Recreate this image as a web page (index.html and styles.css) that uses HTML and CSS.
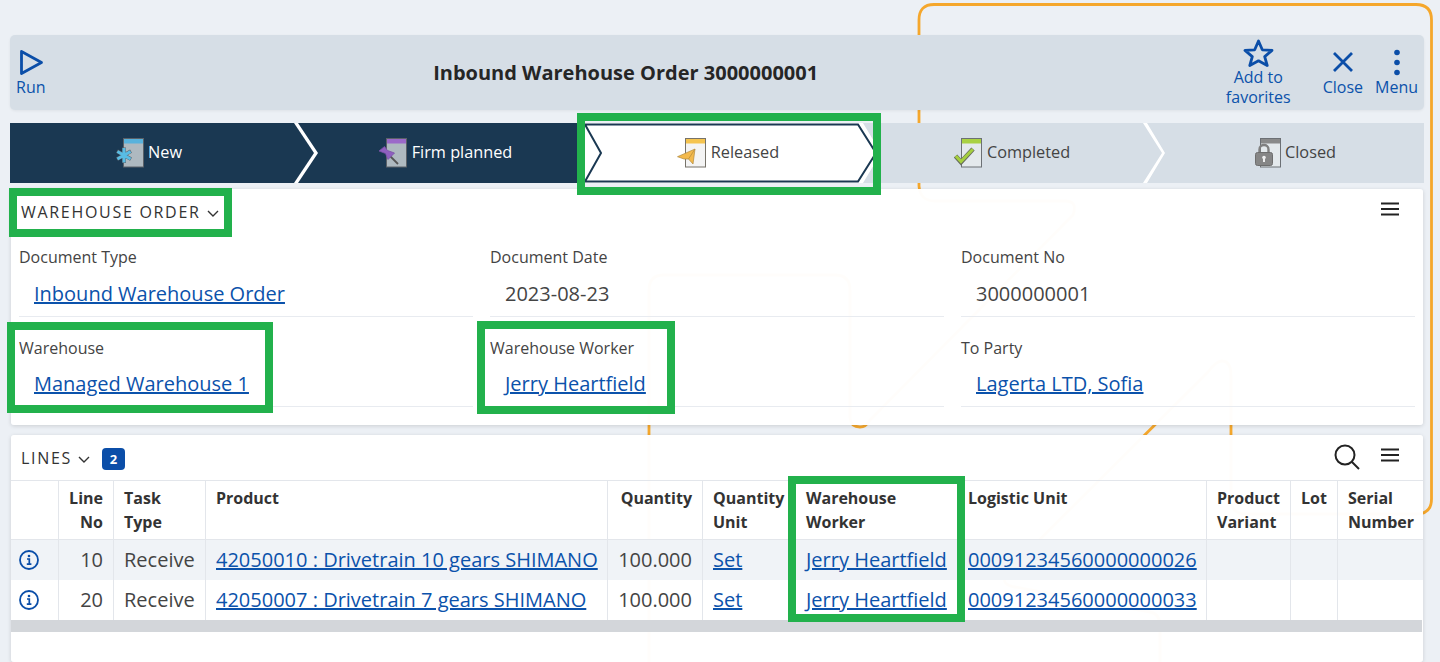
FILE: index.html
```html
<!DOCTYPE html>
<html lang="en">
<head>
  <meta charset="UTF-8" />
  <title>Inbound Warehouse Order 3000000001</title>
  <link rel="stylesheet" href="styles.css">
</head>
<body>
  <svg class="backdrop" width="1440" height="662" viewBox="0 0 1440 662" fill="none">
    <path d="M919 186V20Q919 4.5 934 4.5H1416Q1431.5 4.5 1431.5 20V499Q1431.5 514 1416 514H1246Q1231 514 1231 499V376Q1231 361 1222 361Q1216 361 1208 372L1006 573Q1000 585 1015 587L1150 612Q1160 614 1160 625V662"/>
    <path d="M649 662V290Q649 275 664 275H835Q850 275 850 290V418Q851 427 860 427Q866 427 870 420L1073 215Q1078 201 1065 201H935Q920 201 919 186"/>
  </svg>

  <div class="page">
    <div class="toolbar">
      <button class="tool">
        <svg width="26" height="27" viewBox="0 0 26 27" fill="none"><path d="M3.5 2.5L23.5 13.5L3.5 24.5Z" class="tool-stroke"/></svg>
        <span>Run</span>
      </button>
      <h1 class="title">Inbound Warehouse Order 3000000001</h1>
      <button class="tool tool-fav">
        <svg width="32" height="28" viewBox="0 0 32 28" fill="none"><path d="M16.5 2L20.3 10.8L30 11.4L22.7 17.6L25.2 26.5L16.5 21.8L7.8 26.5L10.3 17.6L3 11.4L12.7 10.8Z" class="tool-stroke"/></svg>
        <span>Add to<br>favorites</span>
      </button>
      <button class="tool">
        <svg width="24" height="27" viewBox="0 0 24 27" fill="none"><path d="M3 4L21 22M21 4L3 22" class="tool-stroke"/></svg>
        <span>Close</span>
      </button>
      <button class="tool">
        <svg width="10" height="27" viewBox="0 0 10 27"><circle cx="5" cy="3.5" r="2.8" fill="#0b4ea8"/><circle cx="5" cy="13.5" r="2.8" fill="#0b4ea8"/><circle cx="5" cy="23.5" r="2.8" fill="#0b4ea8"/></svg>
        <span>Menu</span>
      </button>
    </div>

    <div class="stepper">
      <div class="step step-new">
        <svg width="30" height="30" viewBox="0 0 30 30"><rect x="8.5" y="0.5" width="20" height="28.5" fill="#aeb9c0" stroke="#5b6168"/><rect x="9" y="1" width="19" height="4.5" fill="#58b2dc"/><path d="M9 9.5V25M2 13.2L16 21.2M16 13.2L2 21.2" stroke="#5b6168" stroke-width="3.8"/><path d="M9 10V24.5M2.4 13.5L15.6 21M15.6 13.5L2.4 21" stroke="#58bce4" stroke-width="3"/></svg>
        <span>New</span>
      </div>
      <div class="step step-firm">
        <svg width="30" height="30" viewBox="0 0 30 30"><rect x="8.5" y="0.5" width="20" height="28.5" fill="#aeb9c0" stroke="#5b6168"/><rect x="9" y="1" width="19" height="4.5" fill="#9b69c9"/><path d="M12 18L20 26" stroke="#555" stroke-width="1.8"/><path d="M1 13L6.5 8.5L9.5 12.5L16.5 15L10 21.5L7.5 15.5Z" fill="#8f5fc0" stroke="#7a52a6" stroke-width=".8"/></svg>
        <span>Firm planned</span>
      </div>
      <div class="step step-released">
        <svg class="step-shape" width="298" height="60" viewBox="0 0 298 60" fill="#fff"><path d="M3 1.5H276L294 30L276 58.5H3L19 30Z" stroke="#1a3852" stroke-width="2"/></svg>
        <svg width="30" height="30" viewBox="0 0 30 30"><rect x="8.5" y="0.5" width="20" height="28.5" fill="#f4f4f4" stroke="#77736a"/><rect x="9" y="1" width="19" height="4.5" fill="#f5c44f"/><path d="M0.5 18.7L18 11L16 26L11.5 21L7 21Z" fill="#f3b94c" stroke="#b08a3e" stroke-width=".7"/><path d="M18 11L11.5 21" stroke="#b08a3e" stroke-width=".7"/></svg>
        <span>Released</span>
      </div>
      <div class="step step-completed">
        <svg width="30" height="30" viewBox="0 0 30 30"><rect x="8.5" y="0.5" width="20" height="28.5" fill="#e4e9ec" stroke="#6c7075"/><rect x="9" y="1" width="19" height="4.5" fill="#a9d143"/><path d="M2.5 18L8 24L20 11" fill="none" stroke="#666b5c" stroke-width="4.6"/><path d="M2.8 18L8 23.6L19.8 11.2" fill="none" stroke="#a5cf3f" stroke-width="3"/></svg>
        <span>Completed</span>
      </div>
      <div class="step step-closed">
        <svg width="26" height="30" viewBox="0 0 26 30"><rect x="5.5" y="0.5" width="20" height="28.5" fill="#e4e9ec" stroke="#6c7075"/><rect x="6" y="1" width="19" height="4.5" fill="#8a8a8a"/><path d="M4.5 15V11.5C4.5 5.5 13.5 5.5 13.5 11.5V15" fill="none" stroke="#808080" stroke-width="2.4"/><rect x="0.5" y="14.5" width="17" height="13" rx="2" fill="#868686" stroke="#6e6e6e"/><path d="M9 19V24" stroke="#eee" stroke-width="2"/><circle cx="9" cy="19.5" r="1.8" fill="#eee"/></svg>
        <span>Closed</span>
      </div>
    </div>

    <section class="card card-order">
      <div class="card-head">
        <span class="card-name">WAREHOUSE ORDER</span>
        <svg class="chevron" width="12" height="7" viewBox="0 0 12 7" fill="none"><path d="M1 1L6 6L11 1"/></svg>
        <svg class="burger" width="18" height="14" viewBox="0 0 18 14"><path d="M0 1.5H18M0 7H18M0 12.5H18"/></svg>
      </div>
      <div class="fields">
        <div class="field">
          <div class="field-label">Document Type</div>
          <div class="field-value"><a href="#">Inbound Warehouse Order</a></div>
        </div>
        <div class="field">
          <div class="field-label">Document Date</div>
          <div class="field-value">2023-08-23</div>
        </div>
        <div class="field">
          <div class="field-label">Document No</div>
          <div class="field-value">3000000001</div>
        </div>
        <div class="field">
          <div class="field-label">Warehouse</div>
          <div class="field-value"><a href="#">Managed Warehouse 1</a></div>
        </div>
        <div class="field">
          <div class="field-label">Warehouse Worker</div>
          <div class="field-value"><a href="#">Jerry Heartfield</a></div>
        </div>
        <div class="field">
          <div class="field-label">To Party</div>
          <div class="field-value"><a href="#">Lagerta LTD, Sofia</a></div>
        </div>
      </div>
    </section>

    <section class="card card-lines">
      <div class="card-head">
        <span class="card-name">LINES</span>
        <svg class="chevron" width="12" height="7" viewBox="0 0 12 7" fill="none"><path d="M1 1L6 6L11 1"/></svg>
        <span class="badge">2</span>
        <svg class="search" width="26" height="26" viewBox="0 0 26 26" fill="none"><circle cx="11" cy="11" r="9.5"/><path d="M18 18L25 25"/></svg>
        <svg class="burger burger-lines" width="18" height="14" viewBox="0 0 18 14"><path d="M0 1.5H18M0 7H18M0 12.5H18"/></svg>
      </div>
      <table class="lines">
        <colgroup>
          <col class="col-info"><col class="col-no"><col class="col-task"><col class="col-product"><col class="col-qty"><col class="col-unit"><col class="col-worker"><col class="col-logistic"><col class="col-variant"><col class="col-lot"><col class="col-serial">
        </colgroup>
        <thead>
          <tr>
            <th></th>
            <th class="num">Line<br>No</th>
            <th>Task<br>Type</th>
            <th>Product</th>
            <th class="num">Quantity</th>
            <th>Quantity<br>Unit</th>
            <th>Warehouse<br>Worker</th>
            <th>Logistic Unit</th>
            <th>Product<br>Variant</th>
            <th>Lot</th>
            <th>Serial<br>Number</th>
          </tr>
        </thead>
        <tbody>
          <tr>
            <td class="info"><svg width="20" height="20" viewBox="0 0 20 20" fill="none"><circle cx="10" cy="10" r="9" stroke="#0b4ea8" stroke-width="1.8"/><circle cx="10" cy="6" r="1.3" fill="#0b4ea8"/><path d="M8 9H10.3V14M7.8 14.2H12.4" stroke="#0b4ea8" stroke-width="1.7"/></svg></td>
            <td class="num">10</td>
            <td>Receive</td>
            <td><a href="#">42050010 : Drivetrain 10 gears SHIMANO</a></td>
            <td class="num">100.000</td>
            <td><a href="#">Set</a></td>
            <td><a href="#">Jerry Heartfield</a></td>
            <td><a href="#">00091234560000000026</a></td>
            <td></td>
            <td></td>
            <td></td>
          </tr>
          <tr>
            <td class="info"><svg width="20" height="20" viewBox="0 0 20 20" fill="none"><circle cx="10" cy="10" r="9" stroke="#0b4ea8" stroke-width="1.8"/><circle cx="10" cy="6" r="1.3" fill="#0b4ea8"/><path d="M8 9H10.3V14M7.8 14.2H12.4" stroke="#0b4ea8" stroke-width="1.7"/></svg></td>
            <td class="num">20</td>
            <td>Receive</td>
            <td><a href="#">42050007 : Drivetrain 7 gears SHIMANO</a></td>
            <td class="num">100.000</td>
            <td><a href="#">Set</a></td>
            <td><a href="#">Jerry Heartfield</a></td>
            <td><a href="#">00091234560000000033</a></td>
            <td></td>
            <td></td>
            <td></td>
          </tr>
        </tbody>
      </table>
      <div class="scrollbar"></div>
    </section>
  </div>

  <div class="mark mark-step"></div>
  <div class="mark mark-order"></div>
  <div class="mark mark-warehouse"></div>
  <div class="mark mark-worker"></div>
  <div class="mark mark-column"></div>
</body>
</html>
```

FILE: styles.css
```css
* {
  box-sizing: border-box;
}
html, body {
  height: 100%;
}
body {
  margin: 0;
  position: relative;
  overflow: hidden;
  background: #ecf0f5;
  color: #444;
  font-family: "Open Sans", sans-serif;
  font-size: 16px;
}
a {
  color: #0b52ab;
}

.backdrop {
  position: absolute;
  left: 0;
  top: 0;
}
.backdrop path {
  stroke: #f5a72c;
  stroke-width: 2.8;
}

.page {
  position: relative;
  padding: 35px 16px 0 10px;
}

/* top bar */
.toolbar {
  display: flex;
  align-items: center;
  height: 75px;
  background: #d6dee6;
  border-radius: 5px;
  box-shadow: 0 1px 3px rgba(0, 0, 0, .06);
}
.tool {
  display: flex;
  flex-direction: column;
  align-items: center;
  padding: 0 6px;
  border: 0;
  background: none;
  color: #0b52ab;
  font: inherit;
  line-height: 20px;
}
.tool svg {
  margin-bottom: 1px;
}
.tool-stroke {
  stroke: #0b4ea8;
  stroke-width: 2.8;
  stroke-linejoin: round;
}
.tool-fav {
  margin-right: 20px;
}
.tool-fav svg {
  margin-bottom: 0;
}
.title {
  flex: 1;
  margin: 0;
  padding-right: 20px;
  text-align: center;
  font-size: 20px;
  font-weight: 700;
  color: #262626;
}

/* status steps */
.stepper {
  display: flex;
  height: 60px;
  margin-top: 13px;
  background: #fff;
}
.step {
  position: relative;
  display: flex;
  align-items: center;
  justify-content: center;
  gap: 4px;
  background: #d6dee6;
  color: #444;
  font-size: 16.3px;
}
.step svg, .step span {
  position: relative;
}
.step span {
  margin-bottom: 2px;
}
.step-new, .step-firm {
  background: #1a3852;
  color: #fff;
}
.step-new {
  width: 304px;
  padding-right: 27px;
  gap: 3px;
  clip-path: polygon(0 0, 284px 0, 100% 50%, 284px 100%, 0 100%);
}
.step-firm {
  width: 299px;
  margin-left: -16px;
  padding-right: 5px;
  clip-path: polygon(0 0, 279px 0, 100% 50%, 279px 100%, 0 100%, 20px 50%);
}
.step-released {
  width: 298px;
  margin-left: -15px;
  padding-right: 6px;
  background: #fff;
}
.step .step-shape {
  position: absolute;
  left: 0;
  top: 0;
}
.step-completed {
  width: 299px;
  margin-left: -17px;
  padding-right: 2px;
  clip-path: polygon(0 0, 280px 0, 100% 50%, 280px 100%, 0 100%, 18px 50%);
}
.step-closed {
  flex: 1;
  margin-left: -15px;
  padding-left: 20px;
  clip-path: polygon(0 0, 100% 0, 100% 100%, 0 100%, 18px 50%);
}

/* cards */
.card {
  margin: 0 1px;
  background: rgba(255, 255, 255, .98);
  border-radius: 3px;
  box-shadow: 0 1px 4px rgba(0, 0, 0, .14);
}
.card-order {
  margin-top: 6px;
  padding-bottom: 18px;
}
.card-lines {
  margin-top: 10px;
  height: 227px;
}
.card-head {
  display: flex;
  align-items: flex-start;
  padding: 12px 24px 0 10px;
  height: 37px;
}
.card-lines .card-head {
  height: 45px;
}
.card-name {
  line-height: 22px;
  letter-spacing: 1.7px;
  color: #333;
}
.chevron {
  margin: 9px 0 0 6px;
}
.chevron path {
  stroke: #333;
  stroke-width: 1.4;
}
.burger {
  margin: 1px 0 0 auto;
}
.burger path {
  stroke: #222;
  stroke-width: 2;
}
.burger-lines {
  margin-left: 21px;
}
.badge {
  width: 23px;
  height: 22px;
  margin: 1px 0 0 12px;
  border-radius: 4px;
  background: #0b4ea8;
  color: #fff;
  font-size: 13px;
  font-weight: 700;
  line-height: 22px;
  text-align: center;
}
.search {
  margin: -3px 0 0 auto;
}
.search circle, .search path {
  stroke: #222;
  stroke-width: 2;
}

.fields {
  display: grid;
  grid-template-columns: repeat(3, 454px);
  column-gap: 17px;
  padding: 0 8px;
}
.field {
  height: 91px;
  padding-top: 20px;
  border-bottom: 1px solid #e8ebf0;
}
.field:nth-child(n+4) {
  height: 90px;
}
.field-label {
  line-height: 22px;
}
.field-value {
  margin-top: 12px;
  padding-left: 15px;
  font-size: 20px;
  line-height: 27px;
}
.field:nth-child(n+4) .field-value {
  margin-top: 11px;
}

/* lines table */
.lines {
  width: 1412px;
  table-layout: fixed;
  border-collapse: separate;
  border-spacing: 0;
}
.col-info { width: 48px; }
.col-no { width: 55px; }
.col-task { width: 92px; }
.col-product { width: 402px; }
.col-qty { width: 95px; }
.col-unit { width: 93px; }
.col-worker { width: 162px; }
.col-logistic { width: 249px; }
.col-variant { width: 84px; }
.col-lot { width: 47px; }
.col-serial { width: 85px; }
.lines th, .lines td {
  padding: 0 10px;
  border-right: 1px solid #e3e6eb;
  white-space: nowrap;
}
.lines th:last-child, .lines td:last-child {
  border-right: 0;
}
.lines th {
  height: 60px;
  padding-top: 5px;
  border-top: 1px solid #e3e6eb;
  border-bottom: 1px solid #e3e6eb;
  vertical-align: top;
  text-align: left;
  font-weight: 700;
  line-height: 24px;
  color: #333;
}
.lines td {
  height: 40px;
  padding-bottom: 2px;
  font-size: 20px;
}
.lines tbody tr:first-child td {
  background: #f0f3f7;
}
.lines .num {
  text-align: right;
}
.lines .info {
  padding: 0 0 0 8px;
}
.info svg {
  display: block;
}
.scrollbar {
  width: 1411px;
  height: 12px;
  background: #d3d6da;
}

/* green review frames drawn on top of the screenshot */
.mark {
  position: absolute;
  border: 8px solid #22b14c;
}
.mark-step { left: 577px; top: 113px; width: 304px; height: 82px; }
.mark-order { left: 9px; top: 188px; width: 223px; height: 49px; }
.mark-warehouse { left: 7px; top: 322px; width: 266px; height: 91px; }
.mark-worker { left: 477px; top: 321px; width: 198px; height: 93px; }
.mark-column { left: 788px; top: 476px; width: 177px; height: 146px; }
```
